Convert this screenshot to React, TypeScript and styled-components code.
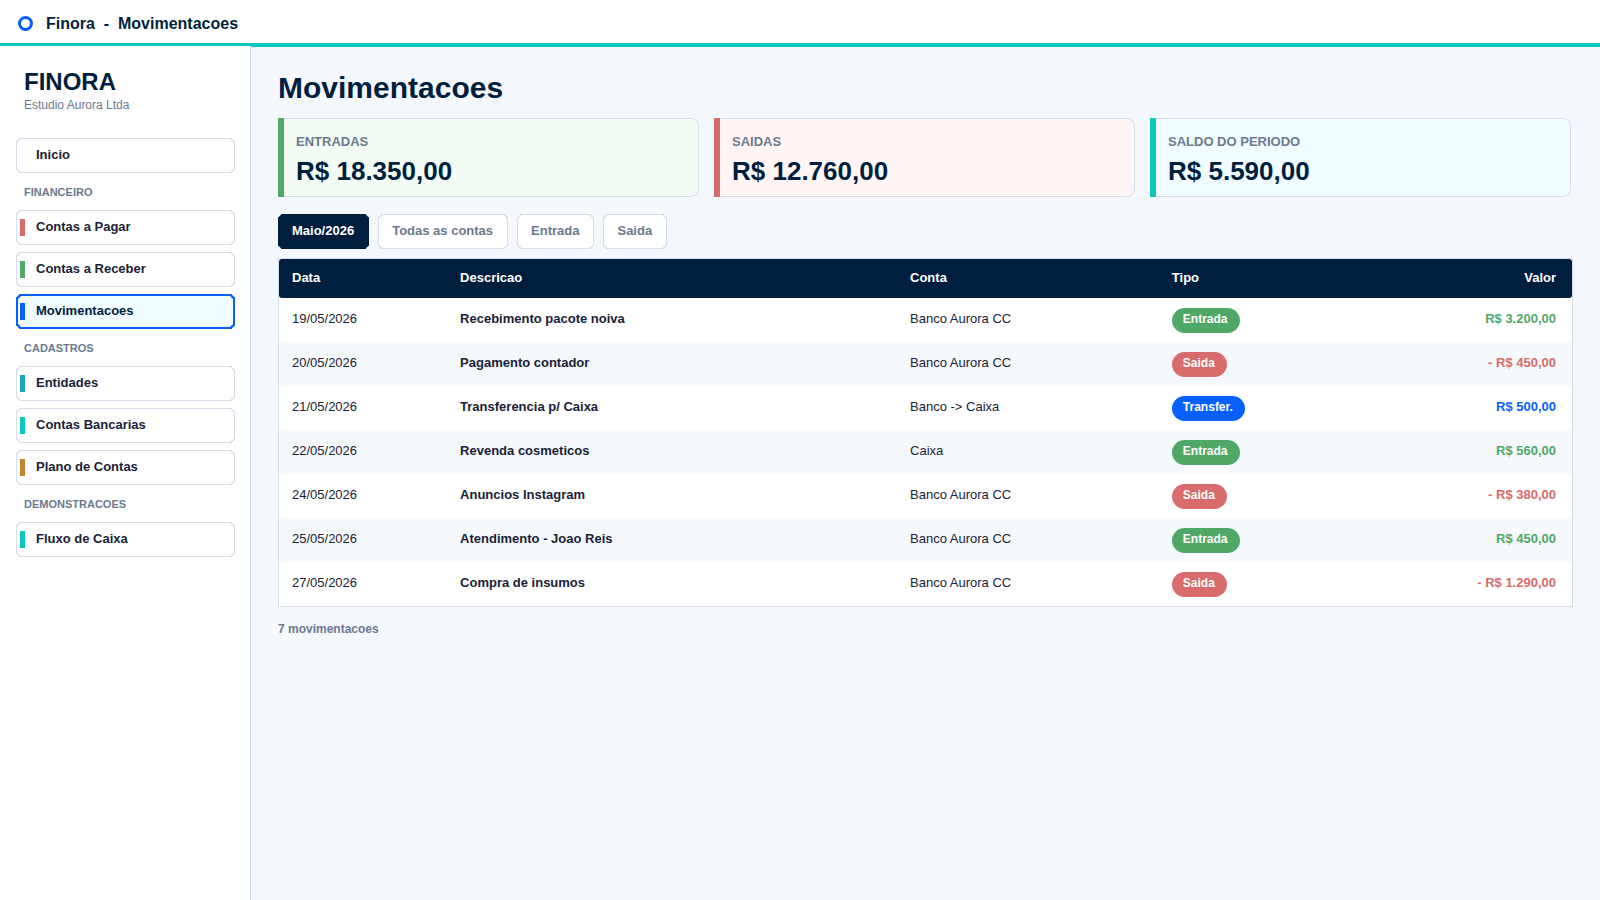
import React from "react";
import styled, { createGlobalStyle } from "styled-components";

const c = {
  navy: "#001f3f",
  ink: "#1a2238",
  muted: "#6b7a90",
  line: "#d5dde8",
  page: "#f4f7fc",
  teal: "#0bc8be",
  blue: "#075fff",
  green: "#50a868",
  red: "#d86b6b",
  cyan: "#18a9b8",
  amber: "#bf8630",
};

const GlobalStyle = createGlobalStyle`
  *, *::before, *::after { box-sizing: border-box; }
  body {
    margin: 0;
    background: ${c.page};
    color: ${c.ink};
    font-family: "Liberation Sans", Arial, sans-serif;
    font-size: 13px;
    line-height: 15px;
  }
`;

const Page = styled.div`
  display: grid;
  grid-template-columns: 251px 1fr;
  grid-template-rows: auto 1fr;
  min-height: 100vh;
`;

const TopBar = styled.header`
  grid-column: 1 / -1;
  display: flex;
  align-items: flex-start;
  gap: 13px;
  height: 46px;
  padding: 16px 18px 0;
  background: #fff;
  border-bottom: 3px solid ${c.teal};
  color: ${c.navy};
`;

const WindowTitle = styled.span`
  font-size: 16px;
  line-height: 16px;
  font-weight: 700;
  white-space: pre;
`;

const Sidebar = styled.aside`
  padding: 20px 15px 20px 16px;
  background: #fff;
  border-right: 1px solid ${c.line};
`;

const Brand = styled.div`
  padding: 2px 8px 26px;
`;

const BrandName = styled.div`
  margin-bottom: 2px;
  font-size: 24px;
  line-height: 28px;
  font-weight: 700;
  color: ${c.navy};
`;

const Company = styled.div`
  font-size: 12px;
  line-height: 14px;
  color: ${c.muted};
`;

const NavGroup = styled.section`
  display: flex;
  flex-direction: column;
  gap: 7px;
`;

const NavHeading = styled.h2`
  margin: 0 0 -7px;
  padding: 13px 8px 11px;
  font-size: 11px;
  line-height: 13px;
  font-weight: 700;
  color: ${c.muted};
`;

const NavLink = styled.a<{ $active?: boolean }>`
  display: flex;
  align-items: center;
  gap: 11px;
  height: 35px;
  padding-left: ${(p) => (p.$active ? 2 : 3)}px;
  border: ${(p) => (p.$active ? `2px solid ${c.blue}` : `1px solid ${c.line}`)};
  border-radius: 4px;
  corner-shape: bevel;
  background: ${(p) => (p.$active ? "#f0fcff" : "#fff")};
  color: ${(p) => (p.$active ? c.navy : c.ink)};
  font-weight: 700;
  text-decoration: none;
`;

const NavMark = styled.span<{ $color: string }>`
  width: 5px;
  height: 17px;
  background: ${(p) => p.$color};
`;

const NavText = styled.span`
  padding-bottom: 2px;
`;

const Main = styled.main`
  padding: 20px 27px;
  border-top: 1px solid ${c.teal};
`;

const Title = styled.h1`
  margin: 0 0 13px;
  padding-top: 4px;
  font-size: 30px;
  line-height: 34px;
  font-weight: 700;
  color: ${c.navy};
`;

const Cards = styled.div`
  display: grid;
  grid-template-columns: repeat(3, 1fr);
  gap: 15px;
  padding-right: 2px;
`;

const Card = styled.section<{ $accent: string; $fill: string }>`
  display: flex;
  height: 79px;
  border: 1px solid ${c.line};
  border-left: 0;
  border-radius: 0 8px 8px 0;
  background: ${(p) => p.$fill};

  &::before {
    content: "";
    width: 6px;
    margin: -1px 12px -1px 0;
    background: ${(p) => p.$accent};
  }
`;

const CardBody = styled.div`
  padding-top: 15px;
`;

const CardLabel = styled.div`
  font-weight: 700;
  color: ${c.muted};
`;

const CardValue = styled.div`
  margin-top: 7px;
  font-size: 26px;
  line-height: 30px;
  font-weight: 700;
  color: ${c.navy};
`;

const Filters = styled.div`
  display: flex;
  gap: 9px;
  margin: 17px 0 9px;
`;

const FilterButton = styled.button<{ $active?: boolean }>`
  height: 35px;
  padding: 0 14px 2px 13px;
  border: 1px solid ${(p) => (p.$active ? c.navy : c.line)};
  border-radius: 4px;
  corner-shape: bevel;
  background: ${(p) => (p.$active ? c.navy : "#fff")};
  color: ${(p) => (p.$active ? "#fff" : c.muted)};
  font: inherit;
  font-weight: 700;
  cursor: pointer;
`;

const TableFrame = styled.div`
  border: 1px solid ${c.line};
  background: #fff;
`;

const Table = styled.table`
  width: 100%;
  table-layout: fixed;
  border-collapse: separate;
  border-spacing: 0;
`;

const Col = styled.col<{ $width?: string }>`
  width: ${(p) => p.$width ?? "auto"};
`;

const HeadCell = styled.th<{ $end?: boolean }>`
  height: 39px;
  padding: ${(p) => (p.$end ? "0 16px 2px 0" : "0 0 2px 13px")};
  background: ${c.navy};
  color: #fff;
  text-align: ${(p) => (p.$end ? "right" : "left")};

  &:first-child { border-radius: 3px 0 0 3px; }
  &:last-child { border-radius: 0 3px 3px 0; }
`;

const Row = styled.tr`
  &:nth-child(even) { background: #f5f9fc; }
`;

const Cell = styled.td<{ $bold?: boolean }>`
  height: 44px;
  padding: 0 0 3px 13px;
  font-weight: ${(p) => (p.$bold ? 700 : 400)};
`;

const BadgeCell = styled(Cell)`
  padding: 1px 0 0 13px;
`;

const Badge = styled.span<{ $color: string }>`
  display: block;
  width: fit-content;
  height: 25px;
  padding: 4px 12px 7px 11px;
  border-radius: 13px;
  background: ${(p) => p.$color};
  color: #fff;
  font-size: 12px;
  line-height: 14px;
  font-weight: 700;
`;

const Amount = styled(Cell)<{ $color: string }>`
  padding: 0 16px 3px 0;
  color: ${(p) => p.$color};
  font-weight: 700;
  text-align: right;
`;

const Summary = styled.p`
  margin: 15px 0 0;
  font-size: 12px;
  line-height: 14px;
  font-weight: 700;
  color: ${c.muted};
`;

type NavItem = { label: string; color: string; active?: boolean };

const groups: { title?: string; items: NavItem[] }[] = [
  { items: [{ label: "Inicio", color: "transparent" }] },
  {
    title: "FINANCEIRO",
    items: [
      { label: "Contas a Pagar", color: c.red },
      { label: "Contas a Receber", color: c.green },
      { label: "Movimentacoes", color: c.blue, active: true },
    ],
  },
  {
    title: "CADASTROS",
    items: [
      { label: "Entidades", color: c.cyan },
      { label: "Contas Bancarias", color: c.teal },
      { label: "Plano de Contas", color: c.amber },
    ],
  },
  { title: "DEMONSTRACOES", items: [{ label: "Fluxo de Caixa", color: c.teal }] },
];

const cards = [
  { label: "ENTRADAS", value: "R$ 18.350,00", accent: c.green, fill: "#f2fcf4" },
  { label: "SAIDAS", value: "R$ 12.760,00", accent: c.red, fill: "#fff5f4" },
  { label: "SALDO DO PERIODO", value: "R$ 5.590,00", accent: c.teal, fill: "#f0fcff" },
];

const filters = ["Maio/2026", "Todas as contas", "Entrada", "Saida"];

const kindColor = { Entrada: c.green, Saida: c.red, "Transfer.": c.blue };

const rows: [string, string, string, keyof typeof kindColor, string][] = [
  ["19/05/2026", "Recebimento pacote noiva", "Banco Aurora CC", "Entrada", "R$ 3.200,00"],
  ["20/05/2026", "Pagamento contador", "Banco Aurora CC", "Saida", "- R$ 450,00"],
  ["21/05/2026", "Transferencia p/ Caixa", "Banco -> Caixa", "Transfer.", "R$ 500,00"],
  ["22/05/2026", "Revenda cosmeticos", "Caixa", "Entrada", "R$ 560,00"],
  ["24/05/2026", "Anuncios Instagram", "Banco Aurora CC", "Saida", "- R$ 380,00"],
  ["25/05/2026", "Atendimento - Joao Reis", "Banco Aurora CC", "Entrada", "R$ 450,00"],
  ["27/05/2026", "Compra de insumos", "Banco Aurora CC", "Saida", "- R$ 1.290,00"],
];

export default function App() {
  return (
    <>
      <GlobalStyle />
      <Page>
        <TopBar>
          <svg width="15" height="15" viewBox="0 0 15 15" aria-hidden="true">
            <circle cx="7.5" cy="7.5" r="6" fill="#fff" stroke={c.blue} strokeWidth="3" />
          </svg>
          <WindowTitle>{"Finora  -  Movimentacoes"}</WindowTitle>
        </TopBar>
        <Sidebar>
          <Brand>
            <BrandName>FINORA</BrandName>
            <Company>Estudio Aurora Ltda</Company>
          </Brand>
          <nav>
            {groups.map((g, i) => (
              <NavGroup key={i}>
                {g.title && <NavHeading>{g.title}</NavHeading>}
                {g.items.map((item) => (
                  <NavLink
                    key={item.label}
                    href="#"
                    $active={item.active}
                    aria-current={item.active ? "page" : undefined}
                  >
                    <NavMark $color={item.color} />
                    <NavText>{item.label}</NavText>
                  </NavLink>
                ))}
              </NavGroup>
            ))}
          </nav>
        </Sidebar>
        <Main>
          <Title>Movimentacoes</Title>
          <Cards>
            {cards.map((card) => (
              <Card key={card.label} $accent={card.accent} $fill={card.fill}>
                <CardBody>
                  <CardLabel>{card.label}</CardLabel>
                  <CardValue>{card.value}</CardValue>
                </CardBody>
              </Card>
            ))}
          </Cards>
          <Filters>
            {filters.map((f, i) => (
              <FilterButton key={f} type="button" $active={i === 0}>
                {f}
              </FilterButton>
            ))}
          </Filters>
          <TableFrame>
            <Table>
              <colgroup>
                <Col $width="13%" />
                <Col $width="34.8%" />
                <Col $width="20.25%" />
                <Col $width="13%" />
                <Col />
              </colgroup>
              <thead>
                <tr>
                  <HeadCell>Data</HeadCell>
                  <HeadCell>Descricao</HeadCell>
                  <HeadCell>Conta</HeadCell>
                  <HeadCell>Tipo</HeadCell>
                  <HeadCell $end>Valor</HeadCell>
                </tr>
              </thead>
              <tbody>
                {rows.map(([date, text, account, kind, amount]) => (
                  <Row key={date}>
                    <Cell>{date}</Cell>
                    <Cell $bold>{text}</Cell>
                    <Cell>{account}</Cell>
                    <BadgeCell>
                      <Badge $color={kindColor[kind]}>{kind}</Badge>
                    </BadgeCell>
                    <Amount $color={kindColor[kind]}>{amount}</Amount>
                  </Row>
                ))}
              </tbody>
            </Table>
          </TableFrame>
          <Summary>7 movimentacoes</Summary>
        </Main>
      </Page>
    </>
  );
}
